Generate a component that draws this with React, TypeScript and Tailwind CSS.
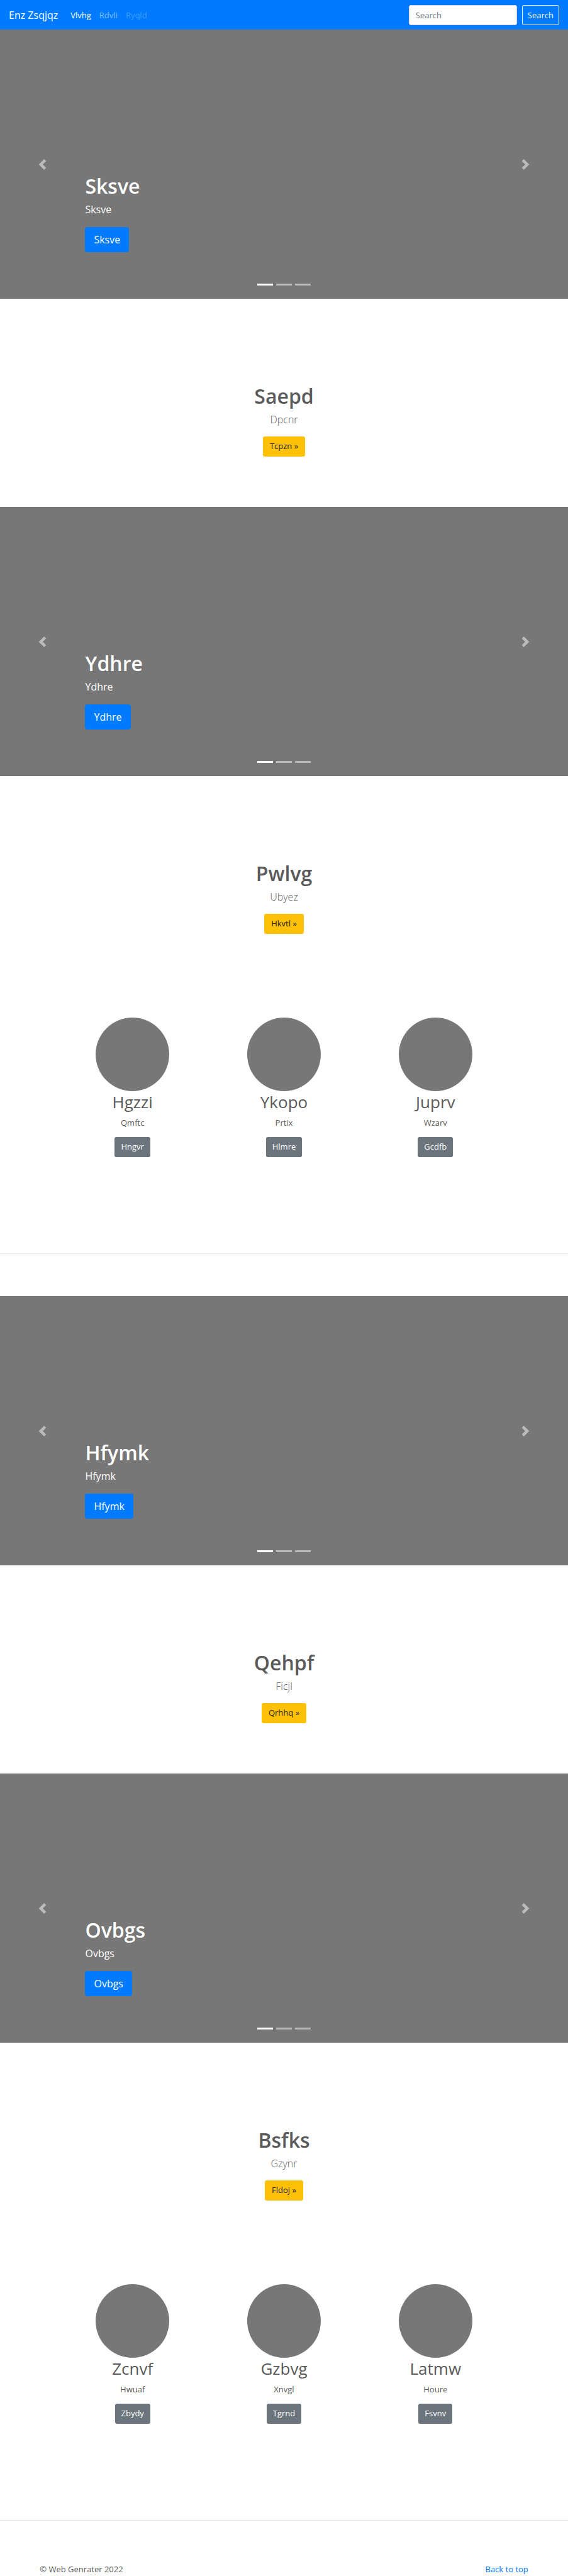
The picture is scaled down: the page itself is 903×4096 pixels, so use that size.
type Item = { title: string; text: string; action: string };
type Block = { hero: string; lead: Item };

const blocks: { first: Block; second: Block; items: Item[] }[] = [
  {
    first: { hero: 'Sksve', lead: { title: 'Saepd', text: 'Dpcnr', action: 'Tcpzn' } },
    second: { hero: 'Ydhre', lead: { title: 'Pwlvg', text: 'Ubyez', action: 'Hkvtl' } },
    items: [
      { title: 'Hgzzi', text: 'Qmftc', action: 'Hngvr' },
      { title: 'Ykopo', text: 'Prtix', action: 'Hlmre' },
      { title: 'Juprv', text: 'Wzarv', action: 'Gcdfb' },
    ],
  },
  {
    first: { hero: 'Hfymk', lead: { title: 'Qehpf', text: 'Ficjl', action: 'Qrhhq' } },
    second: { hero: 'Ovbgs', lead: { title: 'Bsfks', text: 'Gzynr', action: 'Fldoj' } },
    items: [
      { title: 'Zcnvf', text: 'Hwuaf', action: 'Zbydy' },
      { title: 'Gzbvg', text: 'Xnvgl', action: 'Tgrnd' },
      { title: 'Latmw', text: 'Houre', action: 'Fsvnv' },
    ],
  },
];

function Navbar() {
  return (
    <nav className="flex h-[47px] items-center bg-[#007bff] px-[14px] text-[13px] leading-5 text-white">
      <a href="#" className="mr-5 text-[16px] leading-6">Enz Zsqjqz</a>
      <ul className="flex grow gap-[13px]">
        <li><a href="#">Vlvhg</a></li>
        <li><a href="#" className="text-white/50">Rdvli</a></li>
        <li><a href="#" aria-disabled="true" className="text-white/25">Ryqld</a></li>
      </ul>
      <form className="flex gap-2" onSubmit={(e) => e.preventDefault()}>
        <input
          type="search"
          aria-label="Search"
          placeholder="Search"
          className="h-8 w-[172px] rounded-[3px] border border-[#ced4da] bg-white px-[10px] text-[#495057] outline-none placeholder:text-[#6c757d]"
        />
        <button type="submit" className="h-8 rounded-[3px] border border-[#f8f9fa] px-2 text-[#f8f9fa]">
          Search
        </button>
      </form>
    </nav>
  );
}

function Chevron({ next }: { next?: boolean }) {
  return (
    <svg viewBox="0 0 8 8" className="h-[17px] w-[17px] fill-white" aria-hidden="true">
      {next ? (
        <path d="M2.75 0l-1.5 1.5 2.5 2.5-2.5 2.5 1.5 1.5 4-4-4-4z" />
      ) : (
        <path d="M5.25 0l-4 4 4 4 1.5-1.5-2.5-2.5 2.5-2.5-1.5-1.5z" />
      )}
    </svg>
  );
}

function Hero({ title }: { title: string }) {
  return (
    <section className="relative flex h-[428px] bg-[#777] text-white">
      <button type="button" aria-label="Previous" className="flex w-[15%] items-center justify-center opacity-50">
        <Chevron />
      </button>
      <div className="flex grow flex-col items-start justify-end pb-[74px]">
        <h1 className="mb-[5px] text-[32px] leading-10 font-semibold">{title}</h1>
        <p className="mb-[15px] text-[16px] leading-[25px] font-medium">{title}</p>
        <a href="#" className="flex h-10 items-center rounded-[4px] bg-[#007bff] px-[14px] text-[16px] font-medium">
          {title}
        </a>
      </div>
      <button type="button" aria-label="Next" className="flex w-[15%] items-center justify-center opacity-50">
        <Chevron next />
      </button>
      <div className="absolute inset-x-0 bottom-[21px] flex justify-center gap-[5px]">
        <span className="h-[3px] w-[25px] bg-white" />
        <span className="h-[3px] w-[25px] bg-white/50" />
        <span className="h-[3px] w-[25px] bg-white/50" />
      </div>
    </section>
  );
}

function Lead({ item }: { item: Item }) {
  return (
    <section className="flex h-[331px] flex-col items-center pt-[135px]">
      <h2 className="mb-[5px] text-[32px] leading-10 font-semibold">{item.title}</h2>
      <p className="mb-[14px] text-[16px] leading-[25px] font-light">{item.text}</p>
      <a href="#" className="flex h-8 items-center rounded-[3px] bg-[#ffc107] px-[11px] text-[13px] text-[#212529]">
        {item.action} »
      </a>
    </section>
  );
}

function Featurettes({ items }: { items: Item[] }) {
  return (
    <section className="mx-auto grid w-4/5 grid-cols-3 pt-[53px] pb-[153px]">
      {items.map((item) => (
        <div key={item.title} className="flex flex-col items-center">
          <div className="h-[117px] w-[117px] rounded-full bg-[#777]" />
          <h2 className="mb-[5px] text-[26px] leading-[35px]">{item.title}</h2>
          <p className="mb-[13px] text-[13px] leading-5">{item.text}</p>
          <a href="#" className="flex h-8 items-center rounded-[3px] bg-[#6c757d] px-[10px] text-[13px] text-white">
            {item.action}
          </a>
        </div>
      ))}
    </section>
  );
}

export default function App() {
  return (
    <div className="bg-white font-['Open_Sans','Noto_Sans',sans-serif] text-[#5a5a5a]">
      <Navbar />
      <main>
        {blocks.map(({ first, second, items }) => (
          <div key={first.hero} className="group">
            <Hero title={first.hero} />
            <Lead item={first.lead} />
            <Hero title={second.hero} />
            <Lead item={second.lead} />
            <Featurettes items={items} />
            <hr className="mb-[67px] border-t border-black/10 group-last:mb-0" />
          </div>
        ))}
      </main>
      <footer className="flex justify-between px-[7%] pt-[67px] text-[13px] leading-5">
        <p>© Web Genrater 2022</p>
        <a href="#" className="text-[#007bff]">Back to top</a>
      </footer>
    </div>
  );
}
